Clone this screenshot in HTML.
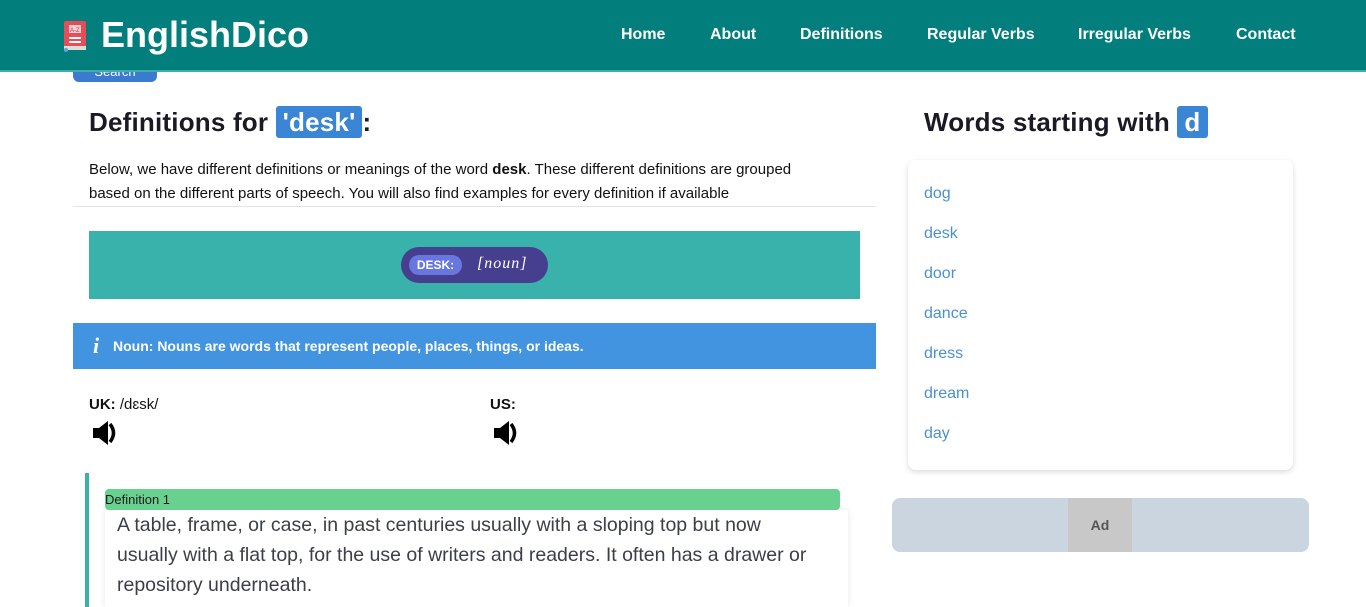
<!DOCTYPE html>
<html><head><meta charset="utf-8">
<style>
*{box-sizing:border-box;margin:0;padding:0}
body{width:1366px;height:607px;overflow:hidden;background:#fff;font-family:"Liberation Sans",Arial,sans-serif;position:relative;color:#111}
.hdr{position:absolute;left:0;top:0;width:1366px;height:72px;background:#027f7c;border-bottom:2px solid #3fb0a9}
.logo{position:absolute;left:101px;top:14px;font-size:36px;font-weight:bold;color:#fff}
.nav{position:absolute;top:26px;font-size:16px;font-weight:bold;color:#fff}
.abs{position:absolute}
.search{left:73px;top:72px;width:84px;height:10px;background:#3a7bd0;border-radius:0 0 6px 6px;color:#fff;font-size:13px;text-align:center;line-height:0px;overflow:hidden}
h1{position:absolute;font-size:26px;font-weight:bold;color:#1a1a24;letter-spacing:0.2px}
.hl{background:#3a86d4;color:#fff;border-radius:3px;padding:1px 7px}
.desc{left:89px;top:158px;width:735px;font-size:15px;line-height:24px}
.teal{left:89px;top:231px;width:771px;height:68px;background:#38b2ab}
.pill{left:401px;top:247px;width:147px;height:36px;background:#463e8f;border-radius:18px}
.tag{position:absolute;left:8px;top:8px;width:53px;height:20px;background:#6877e0;border-radius:10px;color:#fff;font-size:12px;font-weight:bold;text-align:center;line-height:20px}
.info{left:73px;top:323px;width:803px;height:46px;background:#4394e0;color:#fff;font-size:14px;font-weight:bold;line-height:46px;padding-left:40px}
.card{left:908px;top:160px;width:385px;height:310px;background:#fff;border-radius:8px;box-shadow:0 2px 6px rgba(0,0,0,.15)}
.card a{position:absolute;left:16px;font-size:16px;color:#4a90d0;text-decoration:none}
.ad{left:892px;top:498px;width:417px;height:54px;background:#cbd5df;border-radius:8px}
</style></head><body>
<div class="hdr">
<svg class="abs" style="left:62px;top:20px" width="28" height="32" viewBox="0 0 28 32"><rect x="2" y="1" width="22" height="28" rx="2" fill="#e84c57"/><rect x="2" y="26" width="22" height="4" fill="#ddd"/><rect x="7" y="5" width="12" height="8" fill="#f6d0d4"/><text x="8" y="12" font-size="6" fill="#c33" font-family="Liberation Sans">A-Z</text><rect x="7" y="17" width="12" height="2" fill="#fff"/><rect x="7" y="21" width="12" height="2" fill="#fff"/><circle cx="4" cy="30" r="2" fill="#6a9fd8"/></svg>
<div class="logo">EnglishDico</div>
<div class="nav" style="left:621px">Home</div>
<div class="nav" style="left:710px">About</div>
<div class="nav" style="left:800px">Definitions</div>
<div class="nav" style="left:927px">Regular Verbs</div>
<div class="nav" style="left:1078px">Irregular Verbs</div>
<div class="nav" style="left:1236px">Contact</div>
</div>
<div class="abs search">Search</div>
<h1 style="left:89px;top:107px">Definitions for <span class="hl">'desk'</span>:</h1>
<div class="abs desc">Below, we have different definitions or meanings of the word <b>desk</b>. These different definitions are grouped based on the different parts of speech. You will also find examples for every definition if available</div>
<div class="abs" style="left:73px;top:206px;width:803px;height:1px;background:#e3e3e3"></div>
<div class="abs teal"></div>
<div class="abs pill"><div class="tag">DESK:</div><div class="abs" style="left:76px;top:8px;color:#fff;font-family:'Liberation Serif',serif;font-style:italic;font-size:16px;letter-spacing:1px">[noun]</div></div>
<div class="abs info"><span class="abs" style="left:20px;top:0;font-family:'Liberation Serif',serif;font-style:italic;font-size:22px">i</span>Noun: Nouns are words that represent people, places, things, or ideas.</div>
<div class="abs" style="left:89px;top:396px;font-size:15px"><b>UK:</b> /dɛsk/</div>
<div class="abs" style="left:490px;top:396px;font-size:15px"><b>US:</b></div>
<svg class="abs" style="left:92px;top:420px" width="28" height="26" viewBox="0 0 28 26"><path d="M1 8h6l9-7v24l-9-7H1z" fill="#000"/><path d="M18 4q7 9 0 18" stroke="#000" stroke-width="3.5" fill="none"/></svg>
<svg class="abs" style="left:493px;top:420px" width="28" height="26" viewBox="0 0 28 26"><path d="M1 8h6l9-7v24l-9-7H1z" fill="#000"/><path d="M18 4q7 9 0 18" stroke="#000" stroke-width="3.5" fill="none"/></svg>
<div class="abs" style="left:85px;top:473px;width:4px;height:134px;background:#38b2ab"></div>
<div class="abs" style="left:105px;top:510px;width:743px;height:97px;background:#fff;box-shadow:0 0 6px rgba(0,0,0,.1)"></div>
<div class="abs" style="left:105px;top:489px;width:735px;height:21px;background:#68d18f;border-radius:4px;font-size:13px;line-height:21px;color:#1a1a1a">Definition 1</div>
<div class="abs" style="left:117px;top:510px;width:700px;font-size:19.5px;line-height:30px;color:#3b3f46">A table, frame, or case, in past centuries usually with a sloping top but now usually with a flat top, for the use of writers and readers. It often has a drawer or repository underneath.</div>
<h1 style="left:924px;top:107px">Words starting with <span class="hl">d</span></h1>
<div class="abs card">
<a style="top:25px">dog</a><a style="top:65px">desk</a><a style="top:105px">door</a><a style="top:145px">dance</a><a style="top:185px">dress</a><a style="top:225px">dream</a><a style="top:265px">day</a>
</div>
<div class="abs ad"><div class="abs" style="left:176px;top:0;width:64px;height:54px;background:#c8c8c8;text-align:center;line-height:54px;font-size:14px;font-weight:bold;color:#555">Ad</div></div>
</body></html>
